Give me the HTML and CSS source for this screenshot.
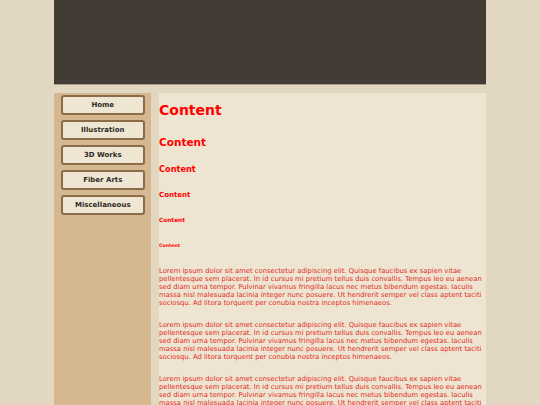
FILE: index.html
```html
<!DOCTYPE html>
<html>
<head>
<meta charset="utf-8">
<link rel="stylesheet" href="styles.css">
</head>
<body>
<div class="page">
  <header class="header"></header>
  <div class="main">
    <nav class="sidebar">
      <a class="nav-btn" href="#">Home</a>
      <a class="nav-btn" href="#">Illustration</a>
      <a class="nav-btn" href="#">3D Works</a>
      <a class="nav-btn" href="#">Fiber Arts</a>
      <a class="nav-btn" href="#">Miscellaneous</a>
    </nav>
    <main class="content">
      <h1>Content</h1>
      <h2>Content</h2>
      <h3>Content</h3>
      <h4>Content</h4>
      <h5>Content</h5>
      <h6>Content</h6>
      <p>Lorem ipsum dolor sit amet consectetur adipiscing elit. Quisque faucibus ex sapien vitae pellentesque sem placerat. In id cursus mi pretium tellus duis convallis. Tempus leo eu aenean sed diam urna tempor. Pulvinar vivamus fringilla lacus nec metus bibendum egestas. Iaculis massa nisl malesuada lacinia integer nunc posuere. Ut hendrerit semper vel class aptent taciti sociosqu. Ad litora torquent per conubia nostra inceptos himenaeos.</p>
      <p>Lorem ipsum dolor sit amet consectetur adipiscing elit. Quisque faucibus ex sapien vitae pellentesque sem placerat. In id cursus mi pretium tellus duis convallis. Tempus leo eu aenean sed diam urna tempor. Pulvinar vivamus fringilla lacus nec metus bibendum egestas. Iaculis massa nisl malesuada lacinia integer nunc posuere. Ut hendrerit semper vel class aptent taciti sociosqu. Ad litora torquent per conubia nostra inceptos himenaeos.</p>
      <p>Lorem ipsum dolor sit amet consectetur adipiscing elit. Quisque faucibus ex sapien vitae pellentesque sem placerat. In id cursus mi pretium tellus duis convallis. Tempus leo eu aenean sed diam urna tempor. Pulvinar vivamus fringilla lacus nec metus bibendum egestas. Iaculis massa nisl malesuada lacinia integer nunc posuere. Ut hendrerit semper vel class aptent taciti sociosqu. Ad litora torquent per conubia nostra inceptos himenaeos.</p>
    </main>
  </div>
</div>
</body>
</html>
```

FILE: styles.css
```css
html, body {
  margin: 0;
  padding: 0;
  background: #e2d8c2;
  font-family: "DejaVu Sans", Verdana, sans-serif;
}
.page {
  width: 432px;
  margin: 0 auto;
}
.header {
  height: 84px;
  background: #423c35;
  border-bottom: 1px solid #a49b8e;
}
.main {
  display: flex;
  gap: 8px;
  margin-top: 8px;
}
.sidebar {
  width: 97px;
  flex: none;
  background: #d5b88f;
  padding: 1.5px 6px 0 6.5px;
  box-sizing: border-box;
  display: flex;
  flex-direction: column;
  gap: 4.5px;
}
.nav-btn {
  display: flex;
  align-items: center;
  justify-content: center;
  height: 20.5px;
  box-sizing: border-box;
  background: #eee6d3;
  border: 2px solid #8c6b49;
  border-radius: 3px;
  color: #2e2a25;
  font-size: 7px;
  font-weight: bold;
  text-decoration: none;
}
.content {
  flex: 1;
  background: #ede5d1;
  padding: 0;
  display: flow-root;
  color: #f00;
}
.content h1, .content h2, .content h3, .content h4, .content h5, .content h6 {
  font-weight: bold;
  color: #f00;
  margin: 0;
}
.content h1 { font-size: 14px; line-height: 17px; margin-top: 8.5px; }
.content h2 { font-size: 10.5px; line-height: 13px; margin-top: 17px; }
.content h3 { font-size: 8.2px; line-height: 10px; margin-top: 15.5px; }
.content h4 { font-size: 7px; line-height: 9px; margin-top: 16.5px; }
.content h5 { font-size: 5.8px; line-height: 7px; margin-top: 17px; }
.content h6 { font-size: 4.7px; line-height: 6px; margin-top: 19.5px; }
.content p {
  font-size: 6.8px;
  line-height: 8px;
  color: #e42a24;
  margin: 17.5px 0 0;
}
.content p + p {
  margin-top: 14px;
}
```
